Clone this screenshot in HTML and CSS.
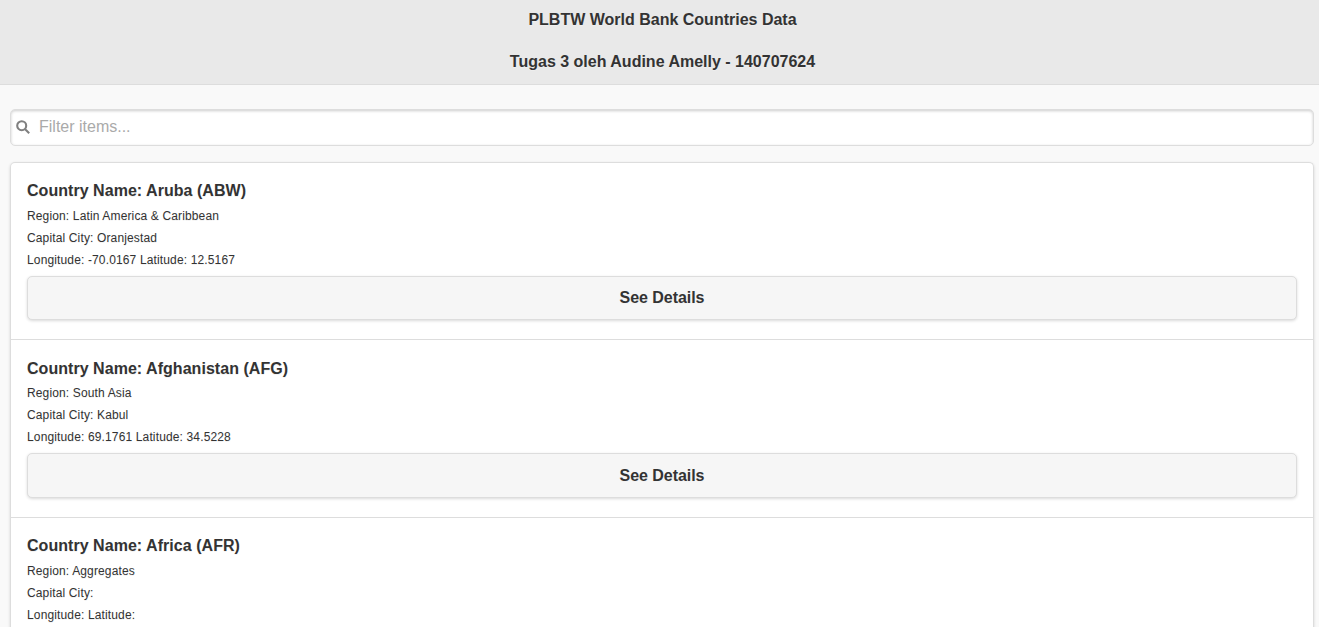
FILE: index.html
```html
<!DOCTYPE html>
<html lang="en">
<head>
<meta charset="utf-8">
<title>PLBTW World Bank Countries Data</title>
<link rel="stylesheet" href="styles.css">
</head>
<body>
<header class="header">
  <h1>PLBTW World Bank Countries Data</h1>
  <h1>Tugas 3 oleh Audine Amelly - 140707624</h1>
</header>
<main class="content">
  <label class="filter">
    <svg class="filter-icon" width="14" height="14" viewBox="0 0 14 14"><circle cx="5.7" cy="5.7" r="4.5"/><path d="M8.9 8.9l4.3 4.3"/></svg>
    <input class="filter-input" type="text" placeholder="Filter items...">
  </label>
  <ul class="list">
    <li class="item">
      <h2>Country Name: Aruba (ABW)</h2>
      <p>Region: Latin America &amp; Caribbean</p>
      <p>Capital City: Oranjestad</p>
      <p>Longitude: -70.0167 Latitude: 12.5167</p>
      <button class="button">See Details</button>
    </li>
    <li class="item">
      <h2>Country Name: Afghanistan (AFG)</h2>
      <p>Region: South Asia</p>
      <p>Capital City: Kabul</p>
      <p>Longitude: 69.1761 Latitude: 34.5228</p>
      <button class="button">See Details</button>
    </li>
    <li class="item">
      <h2>Country Name: Africa (AFR)</h2>
      <p>Region: Aggregates</p>
      <p>Capital City:</p>
      <p>Longitude: Latitude:</p>
    </li>
  </ul>
</main>
</body>
</html>
```
FILE: styles.css
```css
* { box-sizing: border-box; }
html, body { height: 100%; overflow: hidden; }
body {
  margin: 0;
  background: #f9f9f9;
  color: #333;
  font: 16px/1.3 "Liberation Sans", Arial, sans-serif;
  text-shadow: 0 1px 0 #f3f3f3;
}
.header {
  height: 85px;
  padding-left: 6px;
  background: #e9e9e9;
  border-bottom: 1px solid #ddd;
  text-align: center;
  text-shadow: 0 1px 0 #eee;
}
.header h1 {
  margin: 0;
  padding: 9px 0 12px;
  font-size: 16px;
  line-height: 21px;
}
.content { padding: 24px 5px 0 10px; }
.filter {
  display: flex;
  align-items: center;
  height: 37px;
  padding-left: 5px;
  background: #fff;
  border: 1px solid #ddd;
  border-radius: 5px;
  box-shadow: inset 0 1px 3px rgba(0, 0, 0, .2);
}
.filter-icon {
  margin-bottom: 1px;
  fill: none;
  stroke: #808080;
  stroke-width: 2.1;
}
.filter-input {
  flex: 1;
  margin-left: 9px;
  padding: 0;
  border: 0;
  outline: 0;
  background: transparent;
  font: inherit;
}
.filter-input::placeholder { color: #aaa; }
.list {
  margin: 16px 0 0;
  padding: 0;
  list-style: none;
  border-radius: 5px;
  box-shadow: 0 1px 3px rgba(0, 0, 0, .15);
}
.item {
  height: 177.4px;
  padding: 17.3px 16px 0;
  border: solid #ddd;
  border-width: 1px 1px 0;
  background: #fff;
}
.item:first-child { border-radius: 5px 5px 0 0; }
.item h2 {
  margin: 0 0 6.7px;
  font-size: 16px;
  line-height: 21px;
  letter-spacing: .04px;
}
.item p {
  margin: 0 0 6px;
  font-size: 12px;
  line-height: 16px;
  letter-spacing: .14px;
}
.button {
  display: block;
  width: 100%;
  height: 44.3px;
  margin-top: 8px;
  padding: 0 0 1px;
  border: 1px solid #ddd;
  border-radius: 5px;
  background: #f6f6f6;
  box-shadow: 0 1px 3px rgba(0, 0, 0, .15);
  color: #333;
  font: bold 16px/21px "Liberation Sans", Arial, sans-serif;
  letter-spacing: -.05px;
  text-shadow: 0 1px 0 #f3f3f3;
}
```
